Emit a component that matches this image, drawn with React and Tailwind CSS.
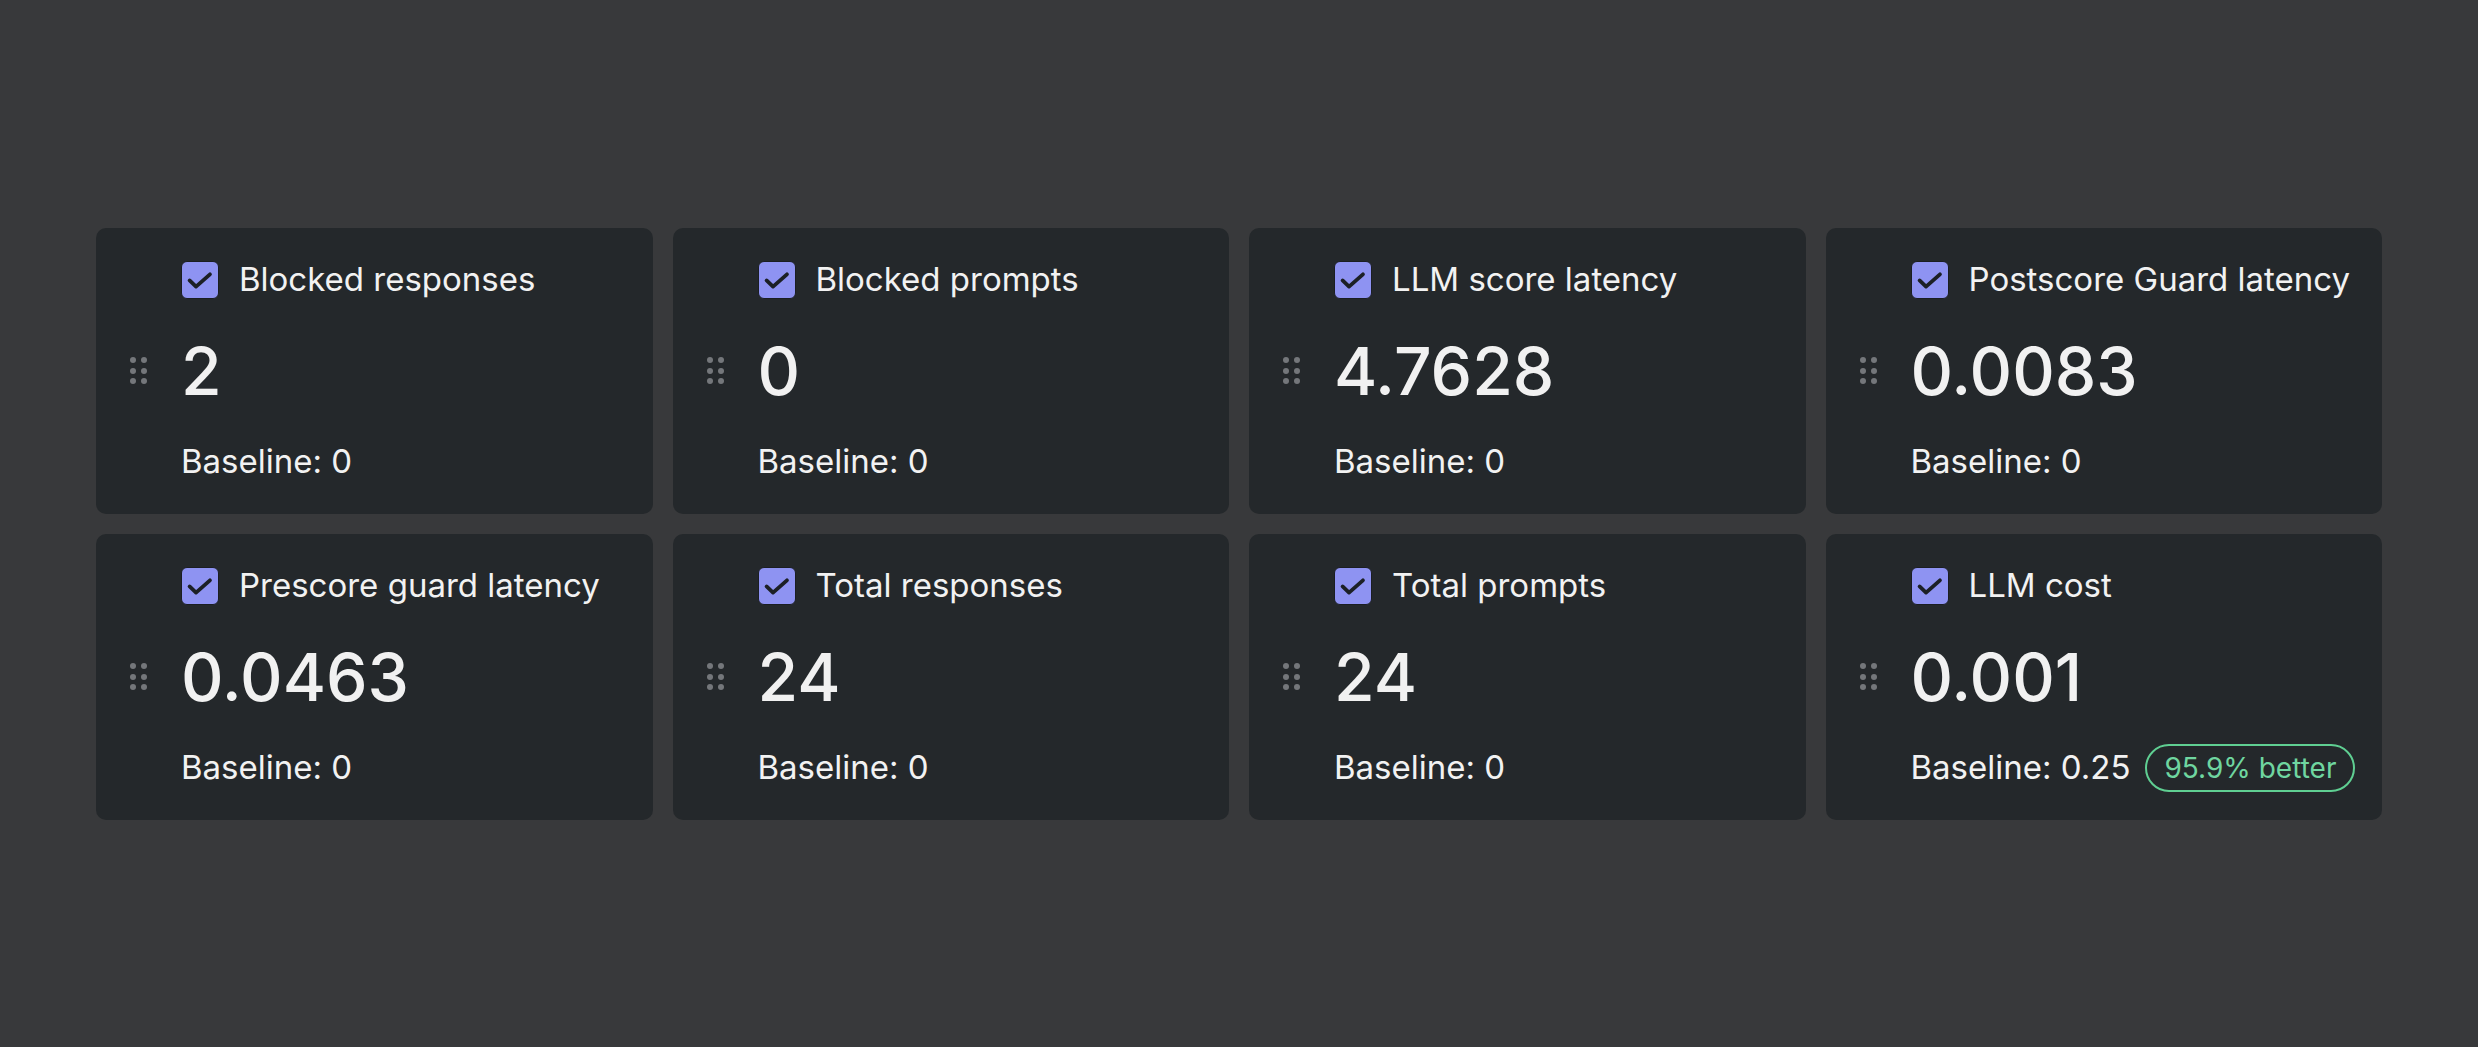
import React from "react";

const metrics = [
  { label: "Blocked responses", value: "2", baseline: "0" },
  { label: "Blocked prompts", value: "0", baseline: "0" },
  { label: "LLM score latency", value: "4.7628", baseline: "0" },
  { label: "Postscore Guard latency", value: "0.0083", baseline: "0" },
  { label: "Prescore guard latency", value: "0.0463", baseline: "0" },
  { label: "Total responses", value: "24", baseline: "0" },
  { label: "Total prompts", value: "24", baseline: "0" },
  { label: "LLM cost", value: "0.001", baseline: "0.25", delta: "95.9% better" },
];

function Checkbox() {
  return (
    <span className="flex h-[38px] w-[38px] shrink-0 items-center justify-center rounded-[6px] border border-[#1b1e23] bg-[#8e93f2]">
      <svg width="38" height="38" viewBox="0 0 38 38" fill="none">
        <path
          d="M8 19.5L14.8 26L29.5 13"
          stroke="#1c2026"
          strokeWidth="4"
          strokeLinecap="round"
          strokeLinejoin="round"
        />
      </svg>
    </span>
  );
}

function DragHandle() {
  return (
    <div className="grid grid-cols-2 gap-x-[5px] gap-y-[4.5px]">
      {[0, 1, 2, 3, 4, 5].map((i) => (
        <span key={i} className="h-[6px] w-[6px] rounded-full bg-[#74777b]" />
      ))}
    </div>
  );
}

function MetricCard({ m }) {
  return (
    <div className="flex flex-col rounded-[10px] bg-[#24282b] pt-[33px] pb-[28px]">
      {/* label */}
      <div className="flex h-[38px] items-center pl-[85px]">
        <Checkbox />
        <span className="ml-[20px] whitespace-nowrap text-[33px] leading-none text-[#f2f2f2]">
          {m.label}
        </span>
      </div>

      {/* value */}
      <div className="mt-[38px] flex h-[68px] items-center">
        <div className="flex w-[85px] shrink-0 pl-[34px]">
          <DragHandle />
        </div>
        <span className="text-[66px] font-medium leading-none text-[#f1f1f1]">
          {m.value}
        </span>
      </div>

      {/* baseline */}
      <div className="mt-[33px] flex h-[48px] items-center pl-[85px]">
        <span className="text-[33px] leading-none text-[#f2f2f2]">
          Baseline: {m.baseline}
        </span>
        {m.delta && (
          <span className="ml-[15px] flex h-[48px] items-center rounded-full border-2 border-[#5fcf92] px-[17px] text-[28px] leading-none text-[#6fd6a0]">
            {m.delta}
          </span>
        )}
      </div>
    </div>
  );
}

export default function App() {
  return (
    <div
      className="flex h-screen w-full items-center bg-[#38393b] px-[96px]"
      style={{ fontFamily: "Inter, 'Noto Sans', sans-serif" }}
    >
      <div className="grid w-full grid-cols-4 gap-[20px]">
        {metrics.map((m) => (
          <MetricCard key={m.label} m={m} />
        ))}
      </div>
    </div>
  );
}
